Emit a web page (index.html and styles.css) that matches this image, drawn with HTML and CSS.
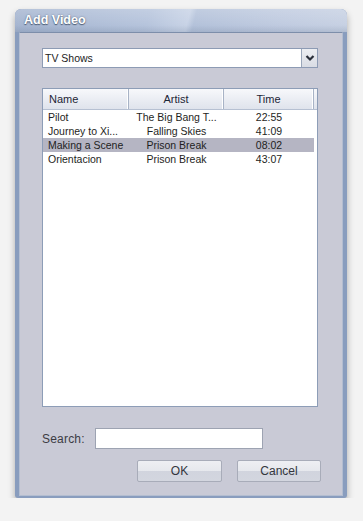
FILE: index.html
```html
<!DOCTYPE html>
<html>
<head>
	<meta charset="utf-8">
	<title>Add Video</title>
	<link rel="stylesheet" href="styles.css">
</head>
<body>
	<div class="window">
		<div class="titlebar">Add Video</div>
		<div class="panel">
			<div class="select">
				<span class="select-value">TV Shows</span>
				<span class="select-btn">
					<svg width="10" height="8" viewBox="0 0 10 8"><polyline points="1.5,2 5,5.5 8.5,2" fill="none" stroke="#2a2f3a" stroke-width="2.2"/></svg>
				</span>
			</div>

			<div class="list">
				<div class="list-head">
					<div class="head-cell name">Name</div>
					<div class="head-cell artist">Artist</div>
					<div class="head-cell time">Time</div>
					<div class="head-cell rest"></div>
				</div>
				<div class="row">
					<span class="name">Pilot</span>
					<span class="artist">The Big Bang T...</span>
					<span class="time">22:55</span>
				</div>
				<div class="row">
					<span class="name">Journey to Xi...</span>
					<span class="artist">Falling Skies</span>
					<span class="time">41:09</span>
				</div>
				<div class="row selected">
					<span class="name">Making a Scene</span>
					<span class="artist">Prison Break</span>
					<span class="time">08:02</span>
				</div>
				<div class="row">
					<span class="name">Orientacion</span>
					<span class="artist">Prison Break</span>
					<span class="time">43:07</span>
				</div>
			</div>

			<div class="search">
				<label class="search-label">Search:</label>
				<input class="search-input" type="text">
			</div>

			<div class="buttons">
				<button class="btn ok">OK</button>
				<button class="btn cancel">Cancel</button>
			</div>
		</div>
	</div>
</body>
</html>
```

FILE: styles.css
```css
* {
	margin: 0;
	padding: 0;
	box-sizing: border-box;
}

body {
	background: #f3f3f3;
	font-family: "Liberation Sans", Arial, sans-serif;
}

.window {
	width: 332px;
	margin: 9px 0 0 15px;
	padding: 0 4px 2px 4px;
	border-radius: 6px 6px 3px 3px;
	background: #899dbe;
	box-shadow: 0 4px 7px rgba(0, 0, 0, .3);
}

.titlebar {
	height: 23px;
	margin: 0 -4px;
	padding: 4px 0 0 9px;
	border-radius: 6px 6px 0 0;
	color: #fff;
	font-size: 12.5px;
	font-weight: bold;
	text-shadow: 0 1px 1px #4e5d75, 0 0 2px #6a7a94;
	background:
		linear-gradient(to bottom, rgba(255, 255, 255, .18), rgba(255, 255, 255, 0) 70%, rgba(60, 80, 110, .15)),
		linear-gradient(104deg, #a5b5d0 0%, #b6c4dc 40%, #c8d3e6 52%, #b4c2da 54%, #c0cbe0 80%, #c7d1e3 100%);
}

.panel {
	height: 464px;
	padding: 15px 21px 13px 22px;
	background: #c9cad6;
	border: 1px solid #b3bdd0;
	border-top-color: #7d8eaa;
	display: flex;
	flex-direction: column;
}

.select {
	height: 20px;
	margin-right: 3px;
	background: #fff;
	border: 1px solid #8d9bb4;
	display: flex;
	align-items: center;
}

.select-value {
	flex: 1;
	padding-left: 2px;
	font-size: 10.5px;
	color: #222;
}

.select-btn {
	width: 16px;
	height: 18px;
	border-left: 1px solid #9aa6ba;
	background: linear-gradient(#eceef2, #d9dce4);
	display: flex;
	align-items: center;
	justify-content: center;
}

.list {
	height: 319px;
	margin: 20px 3px 0 0;
	background: #fff;
	border: 1px solid #8d9db7;
	font-size: 10.5px;
	color: #1e1e22;
}

.list-head {
	height: 21px;
	display: grid;
	grid-template-columns: 86px 95px 90px 1fr;
	border-bottom: 1px solid #b6c0d2;
	background: linear-gradient(#f7f8fb, #dfe3ec);
	font-size: 11px;
}

.head-cell {
	line-height: 20px;
	color: #1d2536;
	border-right: 1px solid #a8b3c6;
	box-shadow: inset -1px 0 0 #fff;
	text-align: center;
}

.head-cell.name {
	text-align: left;
	padding-left: 6px;
}

.head-cell.rest {
	border-right: none;
	box-shadow: none;
}

.row {
	height: 14px;
	display: grid;
	grid-template-columns: 86px 95px 90px;
	line-height: 14px;
	white-space: nowrap;
}

.row span {
	overflow: hidden;
	text-align: center;
}

.row .name {
	text-align: left;
	padding-left: 5px;
}

.row.selected {
	width: 271px;
	background: #b5b5c3;
}

.search {
	height: 21px;
	margin-top: 21px;
	display: flex;
	align-items: center;
}

.search-label {
	width: 53px;
	font-size: 12px;
	color: #3c3c44;
	letter-spacing: .2px;
}

.search-input {
	width: 168px;
	height: 21px;
	background: #fff;
	border: 1px solid #9da3b2;
	outline: none;
}

.buttons {
	height: 22px;
	margin-top: 11px;
	display: flex;
	justify-content: flex-end;
	gap: 15px;
}

.btn {
	height: 22px;
	font-family: "Liberation Sans", Arial, sans-serif;
	font-size: 12px;
	color: #33363d;
	border: 1px solid #a8acb9;
	border-radius: 2px;
	background: linear-gradient(#eeeff3 0%, #e6e8ed 50%, #d1d4de 51%, #d3d6df 100%);
}

.btn.ok {
	width: 85px;
}

.btn.cancel {
	width: 84px;
}
```
